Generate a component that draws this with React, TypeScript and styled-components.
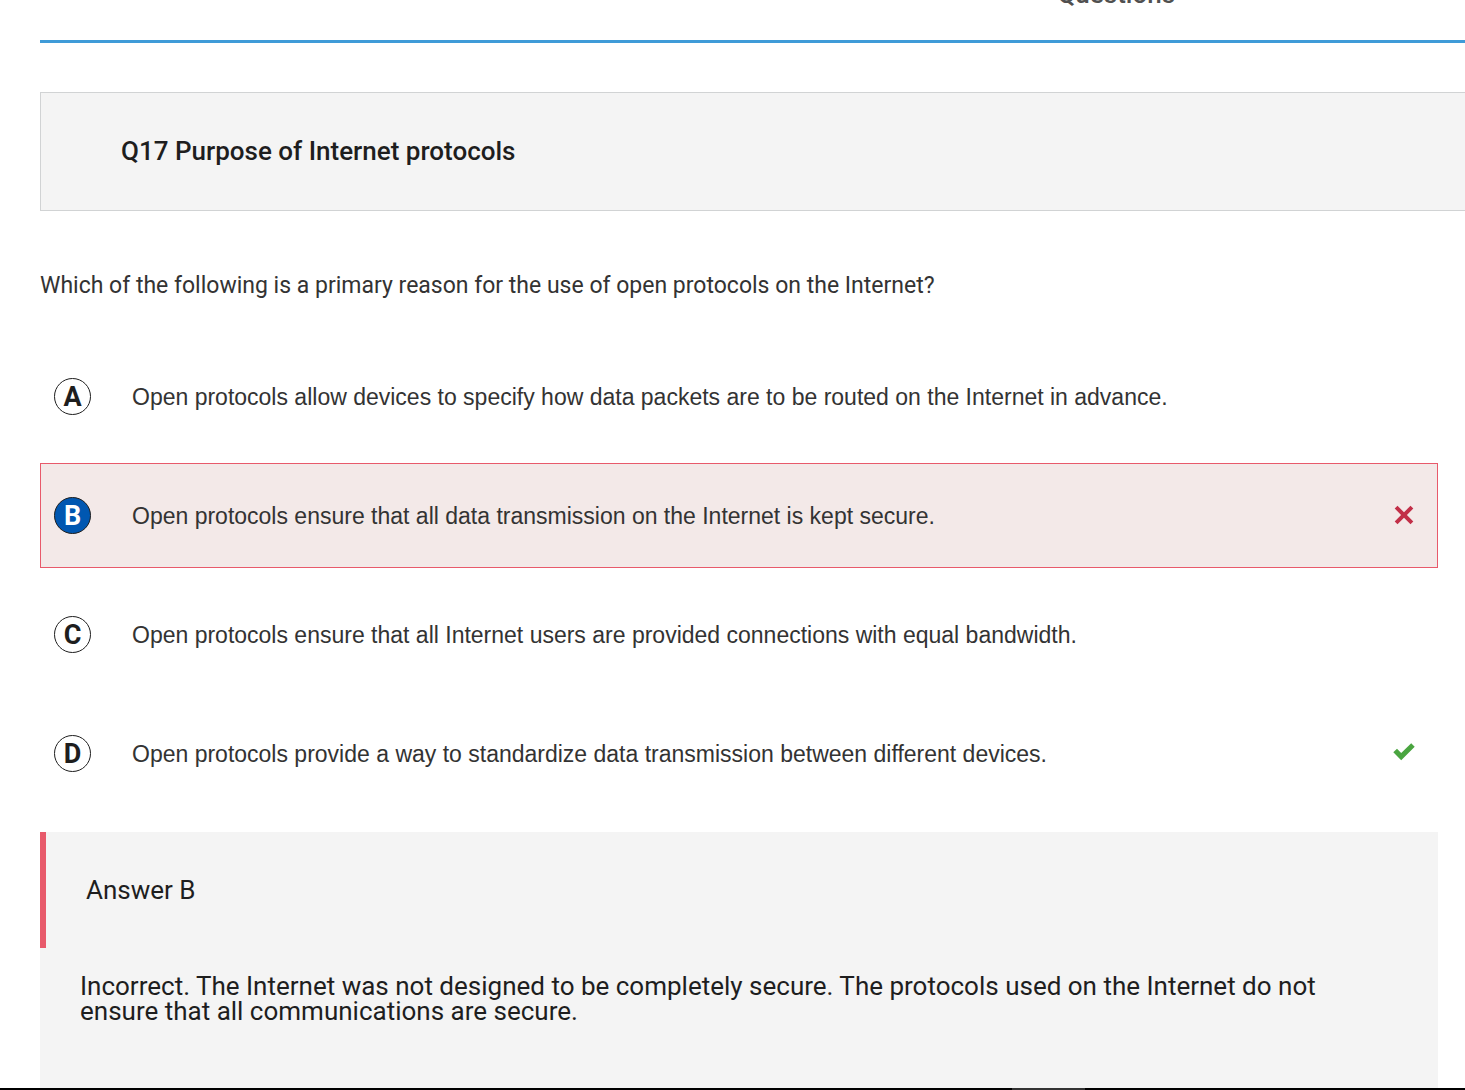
import React, { useState } from "react";
import styled, { createGlobalStyle } from "styled-components";

const GlobalStyle = createGlobalStyle`
  *, *::before, *::after { box-sizing: border-box; }
  body {
    margin: 0;
    background: #fff;
    color: #1e1e1e;
    font-family: Roboto, "Liberation Sans", sans-serif;
  }
  h1, h2, p, fieldset { margin: 0; padding: 0; border: 0; }
`;

const Page = styled.div`
  display: flex;
  flex-direction: column;
  min-height: 100vh;
  overflow: hidden;
`;

const Main = styled.main`
  flex: 1;
  display: flex;
  flex-direction: column;
  padding-left: 40px;
`;

const TabBar = styled.nav`
  display: grid;
  grid-template-columns: 1fr 1fr;
  grid-template-rows: 9px;
  align-items: end;
  margin-right: -10px;
  padding-bottom: 31px;
  border-bottom: 3px solid #3f9bd8;
`;

const Tab = styled.a`
  grid-column: 2;
  justify-self: center;
  color: #505050;
  font-size: 26px;
  font-weight: 500;
  line-height: 30px;
  text-decoration: none;
`;

const Banner = styled.header`
  margin: 49px -10px 0 0;
  padding: 43px 80px;
  border: 1px solid #d1d3d4;
  background: #f4f4f4;
`;

const Title = styled.h1`
  font-size: 26px;
  font-weight: 500;
  line-height: 31px;
`;

const Content = styled.section`
  flex: 1;
  display: flex;
  flex-direction: column;
  padding: 60px 27px 0 0;
`;

const Question = styled.p`
  color: #333;
  font-size: 23px;
  line-height: 30px;
`;

const Options = styled.fieldset`
  display: flex;
  flex-direction: column;
  gap: 14px;
  min-width: 0;
  margin: 43px 0 26px;
`;

const Option = styled.label<{ $wrong: boolean }>`
  display: grid;
  grid-template-columns: 37px 1fr 22px;
  align-items: center;
  column-gap: 41px;
  min-height: 105px;
  padding: 0 22px 0 13px;
  border: 1px solid ${(p) => (p.$wrong ? "#e85a6b" : "transparent")};
  background: ${(p) => (p.$wrong ? "#f3e9e8" : "transparent")};
  cursor: pointer;
`;

const Choice = styled.span`
  display: grid;

  > * { grid-area: 1 / 1; }
`;

const Radio = styled.input`
  appearance: none;
  width: 37px;
  height: 37px;
  margin: 0;
  border: 1px solid #1e1e1e;
  border-radius: 50%;
  background: #fff;
  cursor: pointer;

  &:checked { background: #0057b1; }
`;

const Letter = styled.span`
  align-self: start;
  justify-self: center;
  padding-top: 4px;
  color: #1e1e1e;
  font-size: 27px;
  font-weight: 700;
  line-height: 30px;
  pointer-events: none;

  ${Radio}:checked + & { color: #fff; }
`;

const OptionText = styled.span`
  color: #333;
  font-family: "Liberation Sans", Arial, sans-serif;
  font-size: 23px;
  line-height: 30px;
`;

const Mark = styled.svg<{ $color: string }>`
  display: block;
  width: 22px;
  height: 22px;
  fill: ${(p) => p.$color};
`;

const Feedback = styled.section`
  flex: 1;
  padding-bottom: 24px;
  background: #f4f4f4;
`;

const FeedbackTitle = styled.h2`
  padding: 43px 40px;
  border-left: 6px solid #e85a6b;
  font-size: 26px;
  font-weight: 400;
  line-height: 30px;
`;

const FeedbackText = styled.p`
  padding: 26px 40px 0;
  font-size: 26px;
  line-height: 25px;
`;

const BottomBar = styled.footer`
  display: grid;
  grid-template-columns: 1012fr 73fr 380fr;
  height: 2px;
  background: #000;
`;

const BottomThumb = styled.div`
  grid-column: 2;
  background: #333;
`;

type Result = "wrong" | "right";

const options: { letter: string; text: string; result?: Result }[] = [
  { letter: "A", text: "Open protocols allow devices to specify how data packets are to be routed on the Internet in advance." },
  { letter: "B", text: "Open protocols ensure that all data transmission on the Internet is kept secure.", result: "wrong" },
  { letter: "C", text: "Open protocols ensure that all Internet users are provided connections with equal bandwidth." },
  { letter: "D", text: "Open protocols provide a way to standardize data transmission between different devices.", result: "right" },
];

function ResultMark({ result }: { result: Result }) {
  if (result === "wrong") {
    return (
      <Mark $color="#c22f48" viewBox="0 0 22 22" role="img" aria-label="Incorrect">
        <path d="M4.5.8 11 7.2 17.5.8l2.8 2.8L13.9 10l6.4 6.4-2.8 2.8L11 12.8l-6.5 6.4-2.8-2.8L8.1 10 1.7 3.6z" />
      </Mark>
    );
  }
  return (
    <Mark $color="#4aa540" viewBox="0 0 22 22" role="img" aria-label="Correct">
      <path d="M.3 9.2 4 5.8 8.2 10 18.2.3 21.7 3.8 8.2 17.2z" />
    </Mark>
  );
}

export default function App() {
  const [selected, setSelected] = useState("B");

  return (
    <>
      <GlobalStyle />
      <Page>
        <Main>
          <TabBar>
            <Tab href="#questions">Questions</Tab>
          </TabBar>
          <Banner>
            <Title>Q17 Purpose of Internet protocols</Title>
          </Banner>
          <Content>
            <Question id="question">
              Which of the following is a primary reason for the use of open protocols on the Internet?
            </Question>
            <Options aria-labelledby="question">
              {options.map(({ letter, text, result }) => (
                <Option key={letter} $wrong={result === "wrong"}>
                  <Choice>
                    <Radio
                      type="radio"
                      name="answer"
                      value={letter}
                      checked={selected === letter}
                      onChange={() => setSelected(letter)}
                    />
                    <Letter>{letter}</Letter>
                  </Choice>
                  <OptionText>{text}</OptionText>
                  {result && <ResultMark result={result} />}
                </Option>
              ))}
            </Options>
            <Feedback>
              <FeedbackTitle>Answer B</FeedbackTitle>
              <FeedbackText>
                Incorrect. The Internet was not designed to be completely secure. The protocols used on the
                Internet do not ensure that all communications are secure.
              </FeedbackText>
            </Feedback>
          </Content>
        </Main>
        <BottomBar>
          <BottomThumb />
        </BottomBar>
      </Page>
    </>
  );
}
